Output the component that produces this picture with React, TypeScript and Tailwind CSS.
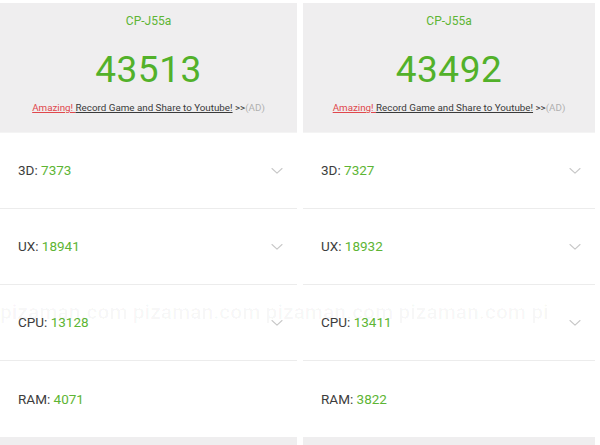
import React from 'react';

interface Result {
  device: string;
  total: number;
  rows: { label: string; value: number; expandable: boolean }[];
}

const results: Result[] = [
  {
    device: 'CP-J55a',
    total: 43513,
    rows: [
      { label: '3D', value: 7373, expandable: true },
      { label: 'UX', value: 18941, expandable: true },
      { label: 'CPU', value: 13128, expandable: true },
      { label: 'RAM', value: 4071, expandable: false },
    ],
  },
  {
    device: 'CP-J55a',
    total: 43492,
    rows: [
      { label: '3D', value: 7327, expandable: true },
      { label: 'UX', value: 18932, expandable: true },
      { label: 'CPU', value: 13411, expandable: true },
      { label: 'RAM', value: 3822, expandable: false },
    ],
  },
];

const Chevron: React.FC = () => (
  <svg width="12" height="8" viewBox="0 0 12 8" fill="none" className="mr-[14px]">
    <path d="M1 1.5 L6 6.2 L11 1.5" stroke="#c8c8c8" strokeWidth="1.1" strokeLinecap="round" strokeLinejoin="round" />
  </svg>
);

const ResultPanel: React.FC<{ result: Result; width: string }> = ({ result, width }) => (
  <div className={`flex flex-col ${width}`}>
    <div className="h-[129px] bg-[#efeeef] flex flex-col items-center">
      <div className="mt-[10px] text-[12px] leading-[16px] text-[#5db534]">{result.device}</div>
      <div className="mt-[21px] text-[37px] leading-[40px] font-normal text-[#52b12a] tracking-[0.5px]">
        {result.total}
      </div>
      <div className="mt-[11px] text-[9.8px] leading-[14px] whitespace-nowrap">
        <span className="text-[#e0474c] underline">Amazing! </span>
        <span className="text-[#3a3a3a] underline">Record Game and Share to Youtube!</span>
        <span className="text-[#3a3a3a]"> &gt;&gt;</span>
        <span className="text-[#b0b0b0]">(AD)</span>
      </div>
    </div>
    <div className="h-[1px] bg-[#f4f4f4]" />
    {result.rows.map((row, i) => (
      <div
        key={row.label}
        className={`h-[76px] bg-white flex items-center justify-between pl-[18px] ${
          i < result.rows.length - 1 ? 'border-b border-[#ececec]' : ''
        }`}
      >
        <div className="text-[13.5px] text-[#3d3d3d]">
          {row.label}: <span className="text-[#5db534]">{row.value}</span>
        </div>
        {row.expandable && <Chevron />}
      </div>
    ))}
    <div className="flex-1 bg-[#efeeef]" />
  </div>
);

const App: React.FC = () => {
  return (
    <div
      className="relative w-[600px] h-[445px] overflow-hidden bg-white pt-[3px]"
      style={{ fontFamily: 'Roboto, "Noto Sans", sans-serif' }}
    >
      <div className="flex h-full gap-[6px]">
        <ResultPanel result={results[0]} width="w-[297px]" />
        <ResultPanel result={results[1]} width="w-[292px]" />
      </div>
      {/* faint site watermark across the CPU row */}
      <div className="pointer-events-none absolute left-0 top-[298px] whitespace-nowrap text-[21px] leading-[28px] font-bold text-black/[0.03]">
        pizaman.com pizaman.com pizaman.com pizaman.com pi
      </div>
    </div>
  );
};

export default App;
